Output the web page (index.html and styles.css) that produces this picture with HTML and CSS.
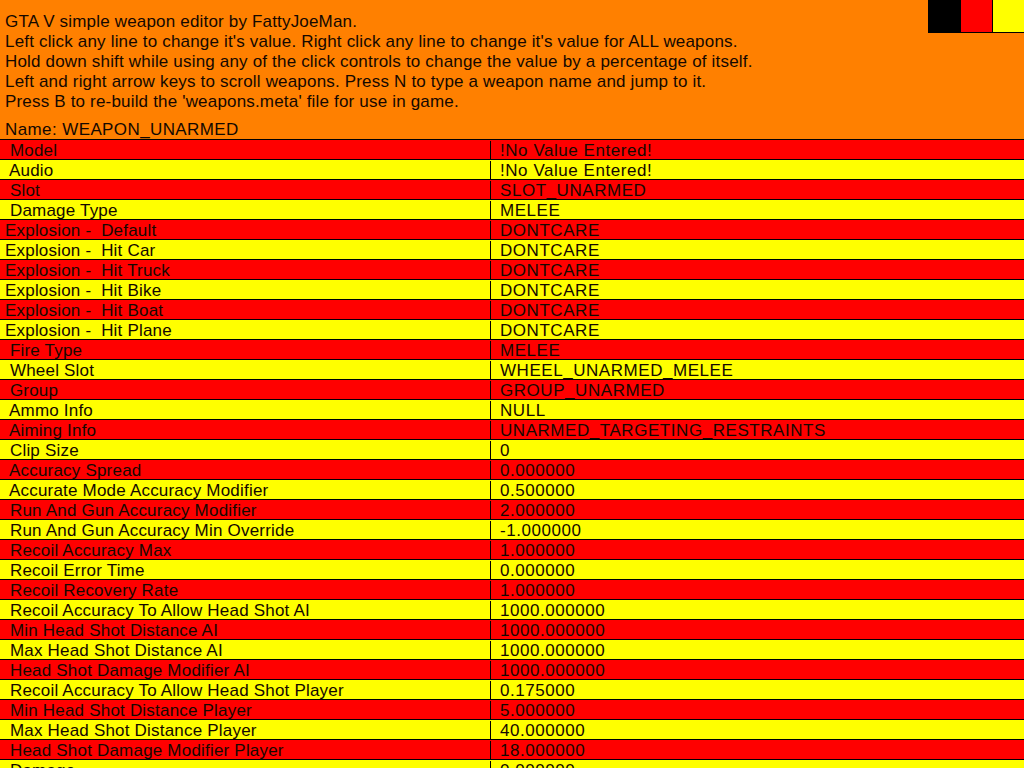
FILE: index.html
```html
<!DOCTYPE html>
<html>
<head>
<meta charset="utf-8">
<title>GTA V simple weapon editor</title>
<link rel="stylesheet" href="styles.css">
</head>
<body>
<div class="swatches">
  <div class="sw sw-black"></div>
  <div class="sw sw-red"></div>
  <div class="sw sw-yellow"></div>
</div>
<div class="intro">
  <div class="line">GTA V simple weapon editor by FattyJoeMan.</div>
  <div class="line">Left click any line to change it's value. Right click any line to change it's value for ALL weapons.</div>
  <div class="line">Hold down shift while using any of the click controls to change the value by a percentage of itself.</div>
  <div class="line">Left and right arrow keys to scroll weapons. Press N to type a weapon name and jump to it.</div>
  <div class="line">Press B to re-build the 'weapons.meta' file for use in game.</div>
</div>
<div class="name">Name: WEAPON_UNARMED</div>
<div class="table">
  <div class="row red"><div class="key"> Model</div><div class="val">!No Value Entered!</div></div>
  <div class="row yellow"><div class="key"> Audio</div><div class="val">!No Value Entered!</div></div>
  <div class="row red"><div class="key"> Slot</div><div class="val">SLOT_UNARMED</div></div>
  <div class="row yellow"><div class="key"> Damage Type</div><div class="val">MELEE</div></div>
  <div class="row red"><div class="key">Explosion -  Default</div><div class="val">DONTCARE</div></div>
  <div class="row yellow"><div class="key">Explosion -  Hit Car</div><div class="val">DONTCARE</div></div>
  <div class="row red"><div class="key">Explosion -  Hit Truck</div><div class="val">DONTCARE</div></div>
  <div class="row yellow"><div class="key">Explosion -  Hit Bike</div><div class="val">DONTCARE</div></div>
  <div class="row red"><div class="key">Explosion -  Hit Boat</div><div class="val">DONTCARE</div></div>
  <div class="row yellow"><div class="key">Explosion -  Hit Plane</div><div class="val">DONTCARE</div></div>
  <div class="row red"><div class="key"> Fire Type</div><div class="val">MELEE</div></div>
  <div class="row yellow"><div class="key"> Wheel Slot</div><div class="val">WHEEL_UNARMED_MELEE</div></div>
  <div class="row red"><div class="key"> Group</div><div class="val">GROUP_UNARMED</div></div>
  <div class="row yellow"><div class="key"> Ammo Info</div><div class="val">NULL</div></div>
  <div class="row red"><div class="key"> Aiming Info</div><div class="val">UNARMED_TARGETING_RESTRAINTS</div></div>
  <div class="row yellow"><div class="key"> Clip Size</div><div class="val">0</div></div>
  <div class="row red"><div class="key"> Accuracy Spread</div><div class="val">0.000000</div></div>
  <div class="row yellow"><div class="key"> Accurate Mode Accuracy Modifier</div><div class="val">0.500000</div></div>
  <div class="row red"><div class="key"> Run And Gun Accuracy Modifier</div><div class="val">2.000000</div></div>
  <div class="row yellow"><div class="key"> Run And Gun Accuracy Min Override</div><div class="val">-1.000000</div></div>
  <div class="row red"><div class="key"> Recoil Accuracy Max</div><div class="val">1.000000</div></div>
  <div class="row yellow"><div class="key"> Recoil Error Time</div><div class="val">0.000000</div></div>
  <div class="row red"><div class="key"> Recoil Recovery Rate</div><div class="val">1.000000</div></div>
  <div class="row yellow"><div class="key"> Recoil Accuracy To Allow Head Shot AI</div><div class="val">1000.000000</div></div>
  <div class="row red"><div class="key"> Min Head Shot Distance AI</div><div class="val">1000.000000</div></div>
  <div class="row yellow"><div class="key"> Max Head Shot Distance AI</div><div class="val">1000.000000</div></div>
  <div class="row red"><div class="key"> Head Shot Damage Modifier AI</div><div class="val">1000.000000</div></div>
  <div class="row yellow"><div class="key"> Recoil Accuracy To Allow Head Shot Player</div><div class="val">0.175000</div></div>
  <div class="row red"><div class="key"> Min Head Shot Distance Player</div><div class="val">5.000000</div></div>
  <div class="row yellow"><div class="key"> Max Head Shot Distance Player</div><div class="val">40.000000</div></div>
  <div class="row red"><div class="key"> Head Shot Damage Modifier Player</div><div class="val">18.000000</div></div>
  <div class="row yellow"><div class="key"> Damage</div><div class="val">0.000000</div></div>
</div>
</body>
</html>
```
FILE: styles.css
```css
html, body {
  margin: 0;
  padding: 0;
  height: 768px;
  overflow: hidden;
}
body {
  background: #ff8000;
  color: #140800;
  font-family: "Liberation Sans", Arial, sans-serif;
  font-size: 17px;
  position: relative;
}
.swatches {
  position: absolute;
  top: 0;
  right: 0;
  width: 96px;
  display: flex;
  gap: 1px;
  background: #000;
  padding-bottom: 1px;
}
.sw {
  height: 32px;
}
.sw-black { width: 32px; background: #000; }
.sw-red { width: 31px; background: #ff0000; }
.sw-yellow { width: 31px; background: #ffff00; }
.intro {
  padding: 12px 0 0 5px;
}
.line {
  line-height: 20px;
  white-space: pre;
  letter-spacing: 0.18px;
}
.name {
  margin-top: 8px;
  padding-left: 5px;
  line-height: 19px;
  height: 19px;
  letter-spacing: 0.4px;
}
.table {
  display: flex;
  flex-direction: column;
}
.row {
  display: flex;
  border-top: 1px solid #000;
  height: 18px;
  padding-top: 1px;
  line-height: 19px;
}
.row.red { background: #ff0000; }
.row.yellow { background: #ffff00; }
.key {
  width: 485px;
  padding-left: 5px;
  white-space: pre;
  letter-spacing: 0.2px;
}
.val {
  flex: 1;
  border-left: 1px solid #000;
  padding-left: 9px;
  white-space: pre;
  letter-spacing: 0.55px;
}
```
